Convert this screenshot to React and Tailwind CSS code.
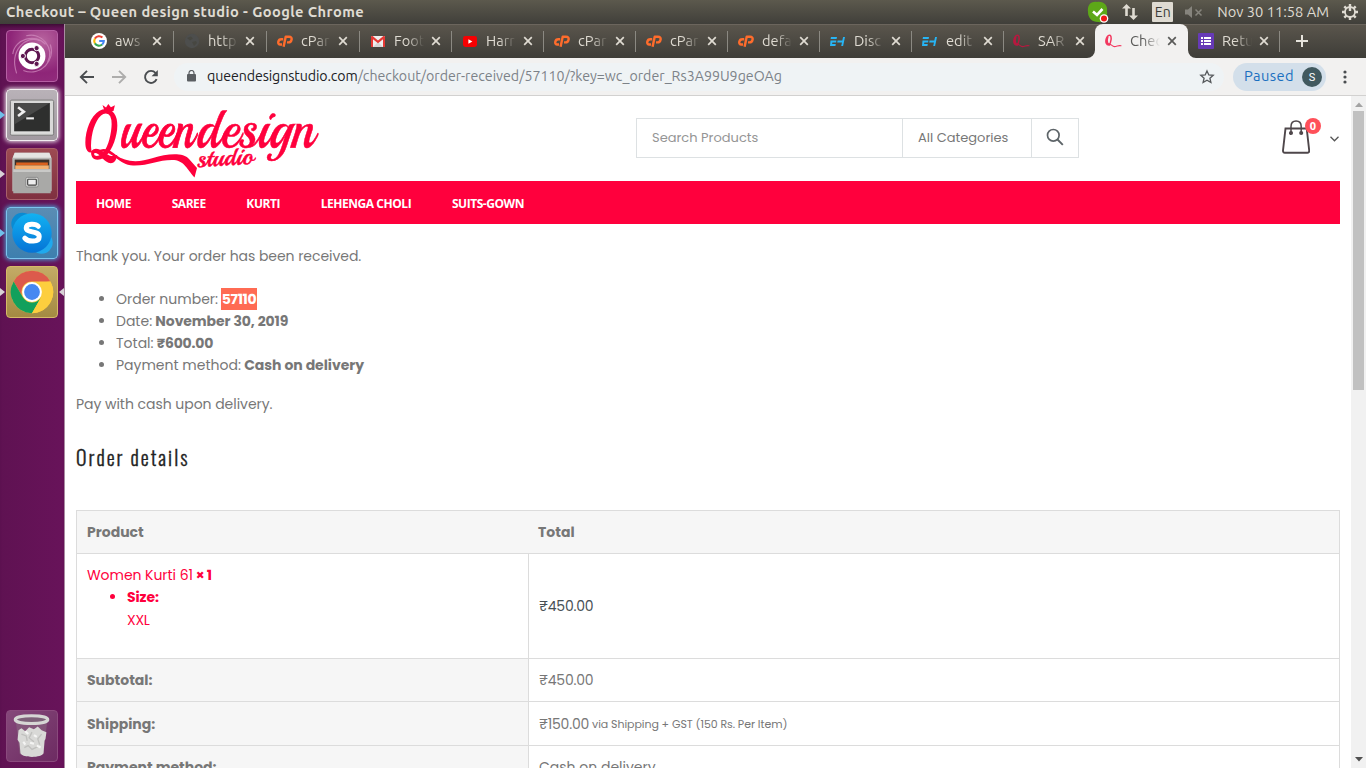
import React from "react";

/* ---------- favicons ---------- */
const GoogleIcon = () => (
  <svg viewBox="0 0 16 16" className="size-4">
    <circle cx="8" cy="8" r="8" fill="#fff" />
    <g fill="none" strokeWidth="2.1">
      <path d="M11.4 4.6A4.8 4.8 0 0 0 3.9 5.6" stroke="#ea4335" />
      <path d="M3.9 5.6A4.8 4.8 0 0 0 3.9 10.4" stroke="#fbbc05" />
      <path d="M3.9 10.4A4.8 4.8 0 0 0 11.2 11.5" stroke="#34a853" />
      <path d="M11.2 11.5A4.8 4.8 0 0 0 12.8 8H8.2" stroke="#4285f4" />
    </g>
  </svg>
);
const GlobeIcon = () => (
  <svg viewBox="0 0 16 16" className="size-4">
    <circle cx="8" cy="8" r="7.2" fill="#4d4e4d" />
    <path d="M3 5l4-1.5 2 2-3 2zM8 9l4-1 1 2-3 3z" fill="#474741" />
  </svg>
);
const CpIcon = () => (
  <svg viewBox="0 0 16 12" className="h-3 w-4">
    <g fill="none" stroke="#ff6c2c" strokeWidth="2.4" strokeLinejoin="round">
      <path d="M6.2 4.3H4.3C2.6 4.3 1.6 5.4 1.3 6.8 1 8.4 1.800 9.500 3.200 9.500H5" />
      <path d="M6.600 11.700L8.700 1.700H12C14 1.700 14.900 2.900 14.600 4.500 14.300 6.300 13 7.400 11.400 7.400H10" />
    </g>
  </svg>
);
const GmailIcon = () => (
  <svg viewBox="0 0 14 11" className="h-[11px] w-[14px]">
    <rect width="14" height="11" rx="1" fill="#efefef" />
    <path d="M2 11L7 6l5 5z" fill="#d6d6d6" />
    <path d="M0 1v10h2V3.200l5 4 5-4V11h2V1C14 .4 13.500 0 13 0h-.6L7 4.400 1.600 0H1C.4 0 0 .4 0 1z" fill="#e53935" />
  </svg>
);
const YoutubeIcon = () => (
  <svg viewBox="0 0 14 11" className="h-[11px] w-[14px]">
    <rect width="14" height="11" rx="2.400" fill="#f60002" />
    <path d="M5.400 3.200v4.600l4-2.300z" fill="#fff" />
  </svg>
);
const EhIcon = () => (
  <svg viewBox="0 0 15 9" className="h-[9px] w-[15px]">
    <path d="M1 0h6L6.600 1.900H.6zM.5 3.500h5.900L6.100 5.400H2.400L2.100 7.100h3.700L5.400 9H0zM7.600 3.500h4.700L13.100 0H15l-1.900 9h-1.900l.8-3.600H7.200z" fill="#27b5f5" />
  </svg>
);
const QueenIcon = ({ dark }) => (
  <svg viewBox="0 0 17 14" className={dark ? "h-3.5 w-[17px] text-[#b8183f]" : "h-3.5 w-[17px] text-[#f2385f]"}>
    <g fill="none" stroke="currentColor" strokeLinecap="round">
      <path d="M4.500 11C1 11.500.4 8 1.200 5 2 2 4 .6 5.200 1.400 6.800 2.600 6.300 8.500 4 11M2.800 3C2 5.500 2.200 8.600 3.200 10" strokeWidth="1.500" />
      <path d="M2.600 10.200C5 8.600 7 12.600 9.500 12.600 12 12.600 13.500 11 16 11.800" strokeWidth="1.100" />
    </g>
  </svg>
);
const FormsIcon = () => (
  <svg viewBox="0 0 16 16" className="size-4">
    <rect width="16" height="16" rx="1" fill="#673ab7" />
    <path d="M3 4h2v2H3zM3 7h2v2H3zM3 10h2v2H3zM6 4h7v2H6zM6 7h7v2H6zM6 10h7v2H6z" fill="#fff" />
  </svg>
);

const tabs = [
  { icon: <GoogleIcon />, label: "aws" },
  { icon: <GlobeIcon />, label: "http" },
  { icon: <CpIcon />, label: "cPar" },
  { icon: <GmailIcon />, label: "Foot" },
  { icon: <YoutubeIcon />, label: "Harr" },
  { icon: <CpIcon />, label: "cPar" },
  { icon: <CpIcon />, label: "cPar" },
  { icon: <CpIcon />, label: "defa" },
  { icon: <EhIcon />, label: "Disc" },
  { icon: <EhIcon />, label: "edit" },
  { icon: <QueenIcon dark />, label: "SAR" },
  { icon: <QueenIcon />, label: "Chec", active: true },
  { icon: <FormsIcon />, label: "Retu" },
];

function Tab({ icon, label, active, divider, wide }) {
  return (
    <div
      className={
        (active ? "-ml-px w-[93px] pl-px " : wide ? "w-[93px] " : "w-[92px] ") +
        (active
          ? "relative flex h-[34px] shrink-0 items-center rounded-t-lg bg-[#f2f1f0] text-[#5a5a58]"
          : "relative flex h-[34px] shrink-0 items-center text-[#dfdbd2]")
      }
    >
      {active && (
        <>
          <svg viewBox="0 0 8 8" className="absolute bottom-0 -left-2 size-2"><path d="M8 0v8H0A8 8 0 0 0 8 0z" fill="#f2f1f0" /></svg>
          <svg viewBox="0 0 8 8" className="absolute -right-2 bottom-0 size-2"><path d="M0 0v8h8A8 8 0 0 1 0 0z" fill="#f2f1f0" /></svg>
        </>
      )}
      <span className="ml-[9px] flex w-[17px] shrink-0 justify-center">{icon}</span>
      <span className="ml-2 w-[34px] shrink-0 text-[14.67px] leading-5 whitespace-nowrap [mask-image:linear-gradient(to_right,#000_13px,transparent_30px)]">
        {label}
      </span>
      <svg viewBox="0 0 10 10" className="ml-[3px] size-2.5 shrink-0">
        <path d="M1.200 1.200l7.600 7.600M8.800 1.200L1.200 8.800" stroke="currentColor" strokeWidth="1.700" />
      </svg>
      {divider && <span className="absolute top-[7px] right-0 h-[21px] w-px bg-[#8b8982]" />}
    </div>
  );
}

/* ---------- desktop panel and launcher ---------- */
function Panel() {
  return (
    <header className="flex h-6 shrink-0 items-center bg-gradient-to-b from-[#5c594d] to-[#403f3a] pr-[7px] pl-1.5 text-[#dfdbd2]">
      <h1 className="text-[14.67px] leading-6 font-bold tracking-[0.415px] whitespace-nowrap">
        Checkout – Queen design studio - Google Chrome
      </h1>
      <svg viewBox="0 0 22 22" className="ml-auto h-[22px] w-[22px]">
        <path d="M1 11C0 4 4 0 10 1c7-1 11 4 10 9 1 7-3 12-9 11C5 21 1 17 1 11z" fill="#5da818" />
        <path d="M6 10.500l4 3.500 5.500-6" fill="none" stroke="#fff" strokeWidth="2.600" />
        <circle cx="17" cy="17.500" r="4.300" fill="#fff" />
        <circle cx="17" cy="17.500" r="3" fill="#f01818" />
      </svg>
      <svg viewBox="0 0 18 18" className="ml-3 size-[18px]">
        <path d="M5.500 1L1 5.600h3.200V13h2.600V5.600H10zM12.500 17L17 12.400h-3.200V5h-2.600v7.400H8z" fill="#dfdbd2" />
      </svg>
      <span className="ml-[13px] flex h-5 w-[21px] items-center justify-center rounded-[1px] bg-[#dfdbd2] text-sm leading-5 text-[#3c3b37]">En</span>
      <svg viewBox="0 0 18 14" className="ml-3 h-3.5 w-[18px]">
        <path d="M0 4.500h3L7 1v12L3 9.500H0z" fill="#86847d" />
        <path d="M10.500 4.500l6 6M16.500 4.500l-6 6" stroke="#86847d" strokeWidth="1.500" />
      </svg>
      <time className="ml-[14px] text-[14.67px] leading-6 whitespace-nowrap">Nov 30 11:58 AM</time>
      <svg viewBox="0 0 18 18" className="ml-3 size-[18px]">
        <g stroke="#dfdbd2" fill="none">
          <circle cx="9" cy="9" r="5" strokeWidth="1.800" />
          <path d="M9 1v7M1 9h3M14 9h3M9 14v3M3.300 3.300l2 2M12.700 12.700l2 2M14.700 3.300l-2 2M5.300 12.700l-2 2" strokeWidth="2.400" />
        </g>
      </svg>
    </header>
  );
}

const tile = "relative flex size-[52px] shrink-0 items-center justify-center rounded-[4px] border";
const Running = ({ blue }) => (
  <svg viewBox="0 0 5 8" className={blue ? "absolute top-[21px] -left-[7px] h-2 w-[5px] text-[#6fc0ea]" : "absolute top-[21px] -left-[7px] h-2 w-[5px] text-[#d8d2d6]"}>
    <path d="M0 0l5 4-5 4z" fill="currentColor" />
  </svg>
);

function Launcher() {
  return (
    <aside className="flex w-[65px] shrink-0 flex-col gap-[7px] border-r border-[#a98ba2] bg-gradient-to-r from-[#5f1252] to-[#68135a] pt-1.5 pl-1.5 shadow-[inset_0_5px_4px_-3px_rgba(0,0,0,0.45)]">
      <div className={tile + " border-[#b55fa3] bg-[radial-gradient(circle_at_70%_20%,#b8649f,#8e2578_60%,#94307f)]"}>
        <svg viewBox="0 0 52 52" className="size-full">
          <path d="M10 44C2 20 20 4 34 10M20 5c16-4 30 12 22 28M45 14c6 16-10 34-28 27M6 24C8 8 30 2 40 14" fill="none" stroke="#d08abd" strokeWidth="1.200" opacity=".75" />
          <circle cx="26" cy="26" r="14" fill="#fff" />
          <circle cx="26" cy="26" r="7" fill="none" stroke="#5e1650" strokeWidth="3.200" />
          <g fill="#5e1650" stroke="#fff" strokeWidth="1">
            <circle cx="16.500" cy="26" r="2.700" /><circle cx="30.800" cy="17.800" r="2.700" /><circle cx="30.800" cy="34.200" r="2.700" />
          </g>
        </svg>
      </div>
      <div className={tile + " border-[#f2eef0] bg-gradient-to-b from-[#b9b2b8] to-[#a29aa1] shadow-[0_0_4px_1px_#e8dfe6]"}>
        <Running blue />
        <svg viewBox="0 0 52 52" className="size-full">
          <rect x="3.500" y="10.500" width="45" height="36.500" rx="1.500" fill="#d9d9d8" stroke="#777" />
          <rect x="7" y="13" width="38" height="30.500" fill="#2e2f2e" stroke="#f2f2f2" strokeWidth=".8" />
          <path d="M7.500 13.500h37L7.500 36z" fill="#484948" />
          <path d="M11.500 18l6 4.500-6 4.500" fill="none" stroke="#f0f0f0" strokeWidth="2.700" />
          <path d="M20 29.500h8" stroke="#f0f0f0" strokeWidth="2.200" />
        </svg>
      </div>
      <div className={tile + " border-[#a8606a] bg-gradient-to-b from-[#9d4a52] to-[#7f3040]"}>
        <Running />
        <svg viewBox="0 0 52 52" className="size-full">
          <path d="M8 4h36l2.500 6v34h-41V10z" fill="#b6b6b4" />
          <path d="M8 4h36l2 5H6z" fill="#e4e4e2" />
          <rect x="8" y="11" width="36" height="12" fill="#3a302a" />
          <rect x="9.500" y="14" width="33" height="3" fill="#d9601d" /><rect x="8.500" y="17" width="35" height="4" fill="#f3b070" />
          <path d="M6.500 21h39v25h-39z" fill="#a9a9a7" />
          <path d="M6.500 21h39v3h-39z" fill="#c9c9c7" />
          <rect x="19.500" y="29.500" width="13" height="10" rx="1.500" fill="#d8d8d6" stroke="#888" />
          <rect x="21.500" y="31.500" width="9" height="6" rx=".8" fill="#eee" stroke="#444" strokeWidth="1.200" />
        </svg>
      </div>
      <div className={tile + " border-[#7cc4ee] bg-gradient-to-b from-[#5a8db4] to-[#3d7fae] shadow-[0_0_4px_1px_#4a9ed2]"}>
        <Running blue />
        <svg viewBox="0 0 52 52" className="size-full">
          <defs>
            <linearGradient id="sky" x1="0" y1="0" x2="0" y2="1"><stop offset="0" stopColor="#12b2f2" /><stop offset="1" stopColor="#0573d6" /></linearGradient>
          </defs>
          <circle cx="16" cy="16.500" r="11.500" fill="#0a8bd2" /><circle cx="36" cy="36" r="11.500" fill="#1fa9ee" />
          <circle cx="26" cy="26" r="20.500" fill="url(#sky)" />
          <path d="M32.500 19c-2.500-3-12.500-3.400-12.500 1.700 0 5.600 13.500 2.500 13.500 9.100 0 5.900-11.500 5.900-15 1.500" fill="none" stroke="#fff" strokeWidth="5.200" strokeLinecap="round" />
        </svg>
      </div>
      <div className={tile + " border-[#d6b968] bg-gradient-to-b from-[#c4ab66] to-[#a48a42]"}>
        <Running />
        <svg viewBox="0 0 5 8" className="absolute top-[21px] -right-[7px] h-2 w-[5px]"><path d="M5 0L0 4l5 4z" fill="#d8d2d6" /></svg>
        <svg viewBox="0 0 52 52" className="size-full">
          <circle cx="26" cy="26" r="22" fill="#fdce3e" />
          <path d="M6.900 15A22 22 0 0 1 45.100 15H26a11 11 0 0 0-9.500 16.500z" fill="#dc5a4c" />
          <path d="M6.900 15A22 22 0 0 0 26 48l9.500-16.500a11 11 0 0 1-19 0z" fill="#12a05c" />
          <path d="M45.100 15A22 22 0 0 1 26 48l9.500-16.500A11 11 0 0 0 36 16z" fill="#fdce3e" />
          <circle cx="26" cy="26" r="10.300" fill="#fff" /><circle cx="26" cy="26" r="8.200" fill="#4688f1" />
        </svg>
      </div>
      <div className={tile + " mt-auto mb-1.5 border-[#8a4a7d] bg-gradient-to-br from-[#85487a] to-[#6d2b62]"}>
        <svg viewBox="0 0 52 52" className="size-full">
          <path d="M9 9l4 35c1 4 24 4 25 0l4-35z" fill="#87617f" opacity=".7" />
          <path d="M12 20l3-2 4 3 4-4 5 2 4-3 4 4 5 2-1 7-1 2-1 13c-2 5-22 5-24 0l-1-11-2-3z" fill="#d9d9d7" />
          <path d="M15 24l5 2 1 5M26 22l-3 6 5 4M36 24l-4 5 2 6M18 38l4-2 4 4 6-3" fill="none" stroke="#c0c0be" strokeWidth="1.400" />
          <path d="M19 21l3 3M31 36l4 2M17 32l2 3M28 25l3 2M24 33l4 1" stroke="#f5f5f4" strokeWidth="2.200" />
          <ellipse cx="25.500" cy="9" rx="17" ry="4" fill="#7d6078" stroke="#d6d6d4" strokeWidth="3" />
        </svg>
      </div>
    </aside>
  );
}

/* ---------- browser toolbar ---------- */
function Toolbar() {
  return (
    <div className="flex h-[38px] shrink-0 items-center border-b border-[#d2d1d0] bg-[#f2f1f0] pl-3.5 text-[#4a4d50]">
      <svg viewBox="0 0 16 16" className="size-4"><path d="M15 8H2M8 1.800L1.800 8 8 14.200" fill="none" stroke="currentColor" strokeWidth="1.900" /></svg>
      <svg viewBox="0 0 16 16" className="ml-4 size-4 text-[#aeadac]"><path d="M1 8h13M8 1.800L14.200 8 8 14.200" fill="none" stroke="currentColor" strokeWidth="1.900" /></svg>
      <svg viewBox="0 0 16 16" className="ml-4 size-4">
        <path d="M13.600 10.200A6 6 0 1 1 12.600 4" fill="none" stroke="currentColor" strokeWidth="1.900" />
        <path d="M14.800 1v6.200H8.600z" fill="currentColor" />
      </svg>
      <div className="ml-[15px] flex h-7 w-[1050px] items-center rounded-full bg-[#eff3f5] pl-[13px]">
        <svg viewBox="0 0 9 12" className="mb-0.5 h-3 w-[9px]">
          <rect y="4" width="9" height="7.500" rx="1" fill="#5a5e62" /><path d="M2 4.500V3a2.500 2.500 0 0 1 5 0v1.500" fill="none" stroke="#5a5e62" strokeWidth="1.200" />
        </svg>
        <p className="mb-0.5 ml-[11px] text-[14.2px] leading-5 tracking-[-0.09px] whitespace-nowrap text-[#7c8288]">
          <span className="text-[#202124]">queendesignstudio.com</span><span className="tracking-[0.01px]">/checkout/order-received/57110/?key=wc_order_Rs3A99U9geOAg</span>
        </p>
        <svg viewBox="0 0 16 16" className="mr-[9px] ml-auto size-4">
          <path d="M8 1.900l1.800 4 4.400.4-3.300 2.900 1 4.300L8 11.200l-3.900 2.300 1-4.300L1.800 6.300l4.400-.4z" fill="none" stroke="#55585b" strokeWidth="1.300" />
        </svg>
      </div>
      <div className="ml-[9px] flex h-7 w-[93px] items-center rounded-full bg-[#d3dfea] pl-[11px]">
        <span className="mb-0.5 text-[14.67px] leading-5 tracking-[0.4px] text-[#1a6fc0]">Paused</span>
        <span className="mr-1 ml-auto flex size-5 items-center justify-center rounded-full bg-[#41595f] pt-px font-[Roboto,sans-serif] text-[11px] leading-none text-white">S</span>
      </div>
      <svg viewBox="0 0 4 16" className="ml-[17px] h-4 w-1" fill="currentColor"><circle cx="2" cy="3" r="1.600" /><circle cx="2" cy="8" r="1.600" /><circle cx="2" cy="13" r="1.600" /></svg>
    </div>
  );
}

/* ---------- shop page ---------- */
function Logo() {
  return (
    <svg viewBox="80 96 245 85" className="ml-1 h-[85px] w-[245px]" fill="#ff003d" role="img">
      <path d="M104.500 111l-2-6 3.500 2.600 2.300-3.600 2.600 3.300 4-2-1.400 5.700z" />
      <g stroke="#ff003d">
        <text x="84" y="155" fontFamily="Dancing Script" fontWeight="700" fontSize="62" textLength="35" lengthAdjust="spacingAndGlyphs" strokeWidth="2">Q</text>
        <text x="120" y="147" fontFamily="Playball" fontSize="56" textLength="74" lengthAdjust="spacingAndGlyphs" strokeWidth=".8">ueen</text>
        <text x="196" y="147" fontFamily="Playball" fontSize="56" textLength="118" lengthAdjust="spacingAndGlyphs" strokeWidth=".5">design</text>
        <text x="197" y="167" fontFamily="Playball" fontSize="25" textLength="57" lengthAdjust="spacingAndGlyphs" transform="rotate(-3 197 167)" strokeWidth=".5">studio</text>
      </g>
      <path d="M96 152c8-6 14-2 20 3 9 7 22 8 37 3 13-4 30-6 36 1l8 9-2.500 9.500C186 168 184 160 172 160c-14 0-24 6-39 5.500-16-.5-20-17-37-13.500z" />
    </svg>
  );
}

function ShopHeader() {
  return (
    <div className="flex h-[85px] shrink-0 items-center">
      <Logo />
      <div className="ml-[311px] flex h-10 w-[443px] -translate-y-px border border-[#dde1e3] text-[13px] leading-[38px] tracking-[0.01px]">
        <span className="w-[266px] border-r border-[#dde1e3] pl-[15px] text-[#959595]">Search Products</span>
        <span className="w-[129px] border-r border-[#dde1e3] pl-[15px] text-[#777]">All Categories</span>
        <svg viewBox="0 0 18 18" className="m-auto size-[18px] -translate-y-px"><circle cx="7.300" cy="7.300" r="5.800" fill="none" stroke="#5d6468" strokeWidth="1.700" /><path d="M11.500 11.500l5.300 5.300" stroke="#5d6468" strokeWidth="1.900" /></svg>
      </div>
      <div className="relative mr-[30px] ml-auto h-[34px] w-[28px] -translate-y-0.5">
        <svg viewBox="0 0 28 34" className="h-[34px] w-7" fill="none" stroke="#4f474b" strokeWidth="1.900">
          <path d="M3.500 8.500h21.200l2.500 22c.1 1.400-.6 2.300-1.800 2.300H2.800C1.600 32.800.9 31.900 1 30.500z" />
          <path d="M9 13V6.500C9 3 11.200 1 14.100 1s5.100 2 5.100 5.500V13" strokeWidth="1.500" />
          <circle cx="9" cy="13" r="1.100" fill="#4f474b" /><circle cx="19.200" cy="13" r="1.100" fill="#4f474b" />
        </svg>
        <span className="absolute -top-[2px] left-[23px] flex size-4 items-center justify-center rounded-full bg-[#ff5059] font-['Open_Sans',sans-serif] text-[11px] leading-4 font-bold text-white">0</span>
        <svg viewBox="0 0 9 6" className="absolute top-4 left-[48px] h-1.5 w-[9px]"><path d="M.5.8l4 4 4-4" fill="none" stroke="#555" strokeWidth="1.300" /></svg>
      </div>
    </div>
  );
}

const price = "flex items-center border-r border-[#dcdcdc] pl-2.5";
const label = "flex items-center border-x border-[#dcdcdc] bg-[#f6f6f6] pl-2.5 font-bold";

function OrderTable() {
  return (
    <div className="mt-[38px] grid shrink-0 grid-cols-[453px_811px] grid-rows-[43px_105px_43px_44px_43px] border-t border-[#dcdcdc] leading-[22px] *:border-b *:border-[#dcdcdc]">
      <div className="flex items-center border-l bg-[#f6f6f6] pl-2.5 font-bold">Product</div>
      <div className="flex items-center border-r bg-[#f6f6f6] pl-[9px] font-bold">Total</div>
      <div className="border-x pt-2.5 pl-2.5 text-[#ff003d]">
        <p className="tracking-[-0.05px]">Women Kurti 61 <b className="-ml-px tracking-[-0.4px]">× 1</b></p>
        <ul className="list-disc pl-10"><li><b className="block tracking-[-0.1px]">Size:</b><span className="mt-px block tracking-[-0.3px]">XXL</span></li></ul>
      </div>
      <div className={price + " tracking-[-0.2px] text-[#474f54]"}>₹450.00</div>
      <div className={label}>Subtotal:</div>
      <div className={price + " tracking-[-0.2px]"}>₹450.00</div>
      <div className={label}>Shipping:</div>
      <div className={price}><span className="tracking-[-0.2px]">₹150.00</span><small className="ml-[3px] text-[11px] tracking-[-0.07px]">via Shipping + GST (150 Rs. Per Item)</small></div>
      <div className={label}>Payment method:</div>
      <div className={price}>Cash on delivery</div>
    </div>
  );
}

function ShopPage() {
  return (
    <main className="flex min-w-0 flex-1 flex-col overflow-hidden bg-white px-[11px] font-[Poppins,Inter,sans-serif] text-sm text-[#777]">
      <ShopHeader />
      <nav className="flex h-[43px] shrink-0 items-center gap-[40.7px] bg-[#ff003d] px-5 pt-0.5 font-['Open_Sans',sans-serif] text-xs font-bold tracking-[-0.45px] text-white">
        <a>HOME</a><a>SAREE</a><a>KURTI</a><a>LEHENGA CHOLI</a><a>SUITS-GOWN</a>
      </nav>
      <p className="mt-[21px] leading-[22px] tracking-[-0.05px]">Thank you. Your order has been received.</p>
      <ul className="mt-[21px] list-disc pl-10 leading-[22px]">
        <li>Order number: <b className="-ml-px inline-block bg-[#ff6b53] px-px tracking-[-0.35px] text-white">57110</b></li>
        <li>Date: <b className="-ml-[0.5px] tracking-[-0.08px]">November 30, 2019</b></li>
        <li>Total: <b className="-ml-[0.5px] tracking-[-0.2px]">₹600.00</b></li>
        <li>Payment method: <b className="-ml-[0.5px] tracking-[-0.03px]">Cash on delivery</b></li>
      </ul>
      <p className="mt-[17px] leading-[22px] tracking-[-0.04px]">Pay with cash upon delivery.</p>
      <h2 className="mt-[27px] font-[Oswald,sans-serif] text-[20px] leading-[30px] font-light tracking-[2px] text-[#222] [-webkit-text-stroke:0.35px_#222]">Order details</h2>
      <OrderTable />
    </main>
  );
}

function Scrollbar() {
  return (
    <div className="flex w-[15px] shrink-0 flex-col items-center bg-[#f1f1f1]">
      <svg viewBox="0 0 8 5" className="mt-1.5 h-[5px] w-2"><path d="M0 5l4-4.500L8 5z" fill="#a3a3a3" /></svg>
      <div className="mt-1 h-[279px] w-[11px] bg-[#c1c1c1]" />
      <svg viewBox="0 0 8 5" className="mt-auto mb-1.5 h-[5px] w-2"><path d="M0 0l4 4.500L8 0z" fill="#505050" /></svg>
    </div>
  );
}

export default function App() {
  return (
    <div className="flex h-[768px] w-[1366px] flex-col overflow-hidden font-[Ubuntu,'Noto_Sans',sans-serif]">
      <Panel />
      <div className="flex min-h-0 flex-1">
        <Launcher />
        <div className="flex min-w-0 flex-1 flex-col">
          <div className="flex h-[34px] shrink-0 items-end bg-gradient-to-b from-[#5b564d] to-[#3e3d38] pl-4 shadow-[inset_0_1px_0_#6b655d]">
            {tabs.map((t, i) => (
              <Tab key={i} {...t} wide={i < 3} divider={!t.active && i !== 10} />
            ))}
            <svg viewBox="0 0 12 12" className="mb-[11px] ml-4 size-3"><path d="M6 0v12M0 6h12" stroke="#e6e3dc" strokeWidth="2" /></svg>
          </div>
          <Toolbar />
          <div className="flex min-h-0 flex-1">
            <ShopPage />
            <Scrollbar />
          </div>
        </div>
      </div>
    </div>
  );
}
